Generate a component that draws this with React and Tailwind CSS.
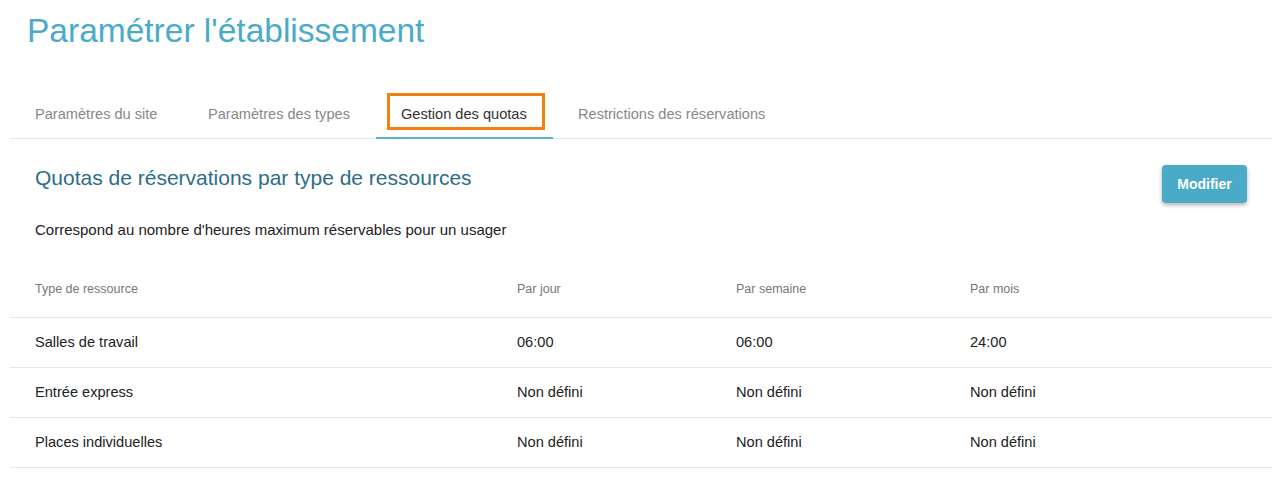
export default function App() {
  const tabs = [
    ["Paramètres du site", "w-[173px]"],
    ["Paramètres des types", "w-[193px]"],
    ["Gestion des quotas", "w-[177px]"],
    ["Restrictions des réservations", ""],
  ];
  const rows = [
    ["Salles de travail", "06:00", "06:00", "24:00"],
    ["Entrée express", "Non défini", "Non défini", "Non défini"],
    ["Places individuelles", "Non défini", "Non défini", "Non défini"],
  ];
  return (
    <div
      className="w-full h-[480px] bg-white pl-[10px] pr-[8px] overflow-hidden"
      style={{ fontFamily: '"Liberation Sans", Arial, sans-serif' }}
    >
      <h1 className="pl-[17px] pt-[11px] text-[33.5px] leading-[40px] font-normal text-[#4aabc9]">
        Paramétrer l'établissement
      </h1>

      <nav className="mt-[39px] flex border-b border-[#e6e6e6]">
        {tabs.map(([t, w], i) => {
          const active = i === 2;
          return (
            <div
              key={t}
              className={
                (active
                  ? "relative -mb-px pl-[25px] pr-[25px] pt-[14px] pb-[13px] text-[14.6px] leading-[20px] whitespace-nowrap text-[#333] border-b-2 border-[#5ab3cf] "
                  : "relative -mb-px pl-[25px] pr-[25px] pt-[14px] pb-[13px] text-[14.6px] leading-[20px] whitespace-nowrap text-[#888] border-b-2 border-transparent ") + w
              }
            >
              {t}
              {active && (
                <div className="absolute left-[11px] right-[8px] top-[3px] bottom-[7px] border-[3px] border-[#f47f0d]" />
              )}
            </div>
          );
        })}
      </nav>

      <div className="flex items-start justify-between pt-[26px] pl-[25px] pr-[25px]">
        <h2 className="mt-px text-[21px] leading-[24px] font-normal text-[#2b6d8b]">
          Quotas de réservations par type de ressources
        </h2>
        <button className="h-[38px] w-[85px] rounded-[4px] bg-[#4aabc8] text-white text-[14px] font-bold shadow-[0_2px_4px_rgba(0,0,0,0.3)]">
          Modifier
        </button>
      </div>

      <p className="mt-[17px] pl-[25px] text-[15px] leading-[20px] text-[#222]">
        Correspond au nombre d'heures maximum réservables pour un usager
      </p>

      <div className="mt-[22px]">
        <div className="grid grid-cols-[482px_219px_234px_1fr] h-[56px] items-center border-b border-[#e6e6e6] text-[12.5px] text-[#777]">
          <div className="px-[25px]">Type de ressource</div>
          <div className="px-[25px]">Par jour</div>
          <div className="px-[25px]">Par semaine</div>
          <div className="px-[25px]">Par mois</div>
        </div>
        {rows.map((r) => (
          <div
            key={r[0]}
            className="grid grid-cols-[482px_219px_234px_1fr] h-[50px] items-center border-b border-[#e6e6e6] text-[14.6px] text-[#222]"
          >
            {r.map((c, j) => (
              <div key={j} className="px-[25px]">
                {c}
              </div>
            ))}
          </div>
        ))}
      </div>
    </div>
  );
}
